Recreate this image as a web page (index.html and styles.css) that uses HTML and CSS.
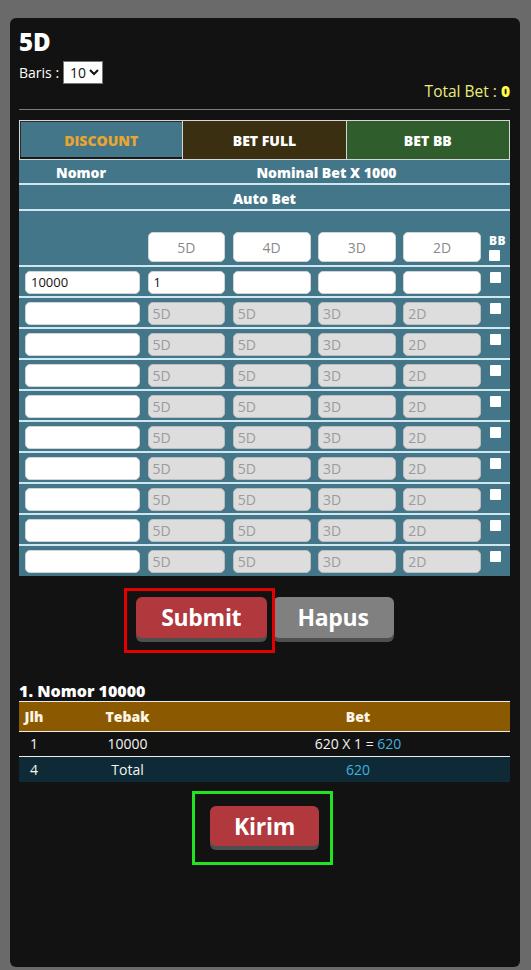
FILE: index.html
```html
<!DOCTYPE html>
<html>
<head>
<meta charset="utf-8">
<link rel="stylesheet" href="styles.css">
</head>
<body>
<div class="card">
  <h2 class="title">5D</h2>
  <div class="baris"><span>Baris :</span><select class="sel"><option>10</option></select></div>
  <div class="total">Total Bet : <b>0</b></div>
  <hr class="rule">

  <div class="bet-table">
    <div class="tabs">
      <div class="tab tab-disc">DISCOUNT</div>
      <div class="tab tab-full">BET FULL</div>
      <div class="tab tab-bb">BET BB</div>
    </div>
    <div class="head-row"><div>Nomor</div><div>Nominal Bet X 1000</div></div>
    <div class="auto-title">Auto Bet</div>

    <div class="grid-row auto-row">
      <div class="cell cell-nomor"></div>
      <div class="cell"><input class="in in-auto" placeholder="5D"></div>
      <div class="cell"><input class="in in-auto" placeholder="4D"></div>
      <div class="cell"><input class="in in-auto" placeholder="3D"></div>
      <div class="cell"><input class="in in-auto" placeholder="2D"></div>
      <div class="cell cell-bb bb-head"><span class="bb-label">BB</span><input type="checkbox" class="chk"></div>
    </div>

    <div class="grid-row data-row">
      <div class="cell cell-nomor"><input class="in" value="10000"></div>
      <div class="cell"><input class="in" value="1"></div>
      <div class="cell"><input class="in"></div>
      <div class="cell"><input class="in"></div>
      <div class="cell"><input class="in"></div>
      <div class="cell cell-bb"><input type="checkbox" class="chk"></div>
    </div>
    <div class="grid-row data-row">
      <div class="cell cell-nomor"><input class="in"></div>
      <div class="cell"><input class="in in-dis" placeholder="5D"></div>
      <div class="cell"><input class="in in-dis" placeholder="5D"></div>
      <div class="cell"><input class="in in-dis" placeholder="3D"></div>
      <div class="cell"><input class="in in-dis" placeholder="2D"></div>
      <div class="cell cell-bb"><input type="checkbox" class="chk"></div>
    </div>
    <div class="grid-row data-row">
      <div class="cell cell-nomor"><input class="in"></div>
      <div class="cell"><input class="in in-dis" placeholder="5D"></div>
      <div class="cell"><input class="in in-dis" placeholder="5D"></div>
      <div class="cell"><input class="in in-dis" placeholder="3D"></div>
      <div class="cell"><input class="in in-dis" placeholder="2D"></div>
      <div class="cell cell-bb"><input type="checkbox" class="chk"></div>
    </div>
    <div class="grid-row data-row">
      <div class="cell cell-nomor"><input class="in"></div>
      <div class="cell"><input class="in in-dis" placeholder="5D"></div>
      <div class="cell"><input class="in in-dis" placeholder="5D"></div>
      <div class="cell"><input class="in in-dis" placeholder="3D"></div>
      <div class="cell"><input class="in in-dis" placeholder="2D"></div>
      <div class="cell cell-bb"><input type="checkbox" class="chk"></div>
    </div>
    <div class="grid-row data-row">
      <div class="cell cell-nomor"><input class="in"></div>
      <div class="cell"><input class="in in-dis" placeholder="5D"></div>
      <div class="cell"><input class="in in-dis" placeholder="5D"></div>
      <div class="cell"><input class="in in-dis" placeholder="3D"></div>
      <div class="cell"><input class="in in-dis" placeholder="2D"></div>
      <div class="cell cell-bb"><input type="checkbox" class="chk"></div>
    </div>
    <div class="grid-row data-row">
      <div class="cell cell-nomor"><input class="in"></div>
      <div class="cell"><input class="in in-dis" placeholder="5D"></div>
      <div class="cell"><input class="in in-dis" placeholder="5D"></div>
      <div class="cell"><input class="in in-dis" placeholder="3D"></div>
      <div class="cell"><input class="in in-dis" placeholder="2D"></div>
      <div class="cell cell-bb"><input type="checkbox" class="chk"></div>
    </div>
    <div class="grid-row data-row">
      <div class="cell cell-nomor"><input class="in"></div>
      <div class="cell"><input class="in in-dis" placeholder="5D"></div>
      <div class="cell"><input class="in in-dis" placeholder="5D"></div>
      <div class="cell"><input class="in in-dis" placeholder="3D"></div>
      <div class="cell"><input class="in in-dis" placeholder="2D"></div>
      <div class="cell cell-bb"><input type="checkbox" class="chk"></div>
    </div>
    <div class="grid-row data-row">
      <div class="cell cell-nomor"><input class="in"></div>
      <div class="cell"><input class="in in-dis" placeholder="5D"></div>
      <div class="cell"><input class="in in-dis" placeholder="5D"></div>
      <div class="cell"><input class="in in-dis" placeholder="3D"></div>
      <div class="cell"><input class="in in-dis" placeholder="2D"></div>
      <div class="cell cell-bb"><input type="checkbox" class="chk"></div>
    </div>
    <div class="grid-row data-row">
      <div class="cell cell-nomor"><input class="in"></div>
      <div class="cell"><input class="in in-dis" placeholder="5D"></div>
      <div class="cell"><input class="in in-dis" placeholder="5D"></div>
      <div class="cell"><input class="in in-dis" placeholder="3D"></div>
      <div class="cell"><input class="in in-dis" placeholder="2D"></div>
      <div class="cell cell-bb"><input type="checkbox" class="chk"></div>
    </div>
    <div class="grid-row data-row last-row">
      <div class="cell cell-nomor"><input class="in"></div>
      <div class="cell"><input class="in in-dis" placeholder="5D"></div>
      <div class="cell"><input class="in in-dis" placeholder="5D"></div>
      <div class="cell"><input class="in in-dis" placeholder="3D"></div>
      <div class="cell"><input class="in in-dis" placeholder="2D"></div>
      <div class="cell cell-bb"><input type="checkbox" class="chk"></div>
    </div>
  </div>

  <div class="actions">
    <span class="submit-wrap"><button class="btn btn-submit">Submit</button></span>
    <button class="btn btn-hapus">Hapus</button>
  </div>

  <div class="sect-title">1. Nomor 10000</div>
  <table class="result">
    <colgroup><col class="c-jlh"><col class="c-tebak"><col></colgroup>
    <thead>
      <tr><th>Jlh</th><th>Tebak</th><th>Bet</th></tr>
    </thead>
    <tbody>
      <tr class="r-item"><td>1</td><td>10000</td><td>620 X 1 = <span class="blue">620</span></td></tr>
      <tr class="r-total"><td>4</td><td>Total</td><td><span class="blue">620</span></td></tr>
    </tbody>
  </table>

  <div class="kirim-row">
    <div class="kirim-box"><button class="btn btn-kirim">Kirim</button></div>
  </div>
</div>
</body>
</html>
```

FILE: styles.css
```css
html, body {
  margin: 0;
  padding: 0;
  background: #6a6a6a;
  font-family: "Open Sans", "Liberation Sans", sans-serif;
}

.card {
  margin: 18px 0 0 10px;
  width: 510px;
  height: 949px;
  box-sizing: border-box;
  padding: 10px 10px 0 9px;
  background: #121212;
  border-radius: 6px;
  color: #fff;
}

.title {
  margin: 0;
  font-size: 24px;
  line-height: 28px;
  font-weight: 800;
}

.baris {
  margin-top: 4px;
  height: 24px;
  display: flex;
  align-items: center;
  gap: 4px;
  font-size: 14px;
}

.sel {
  height: 23px;
  width: 40px;
  font-size: 14px;
  font-family: "Open Sans", sans-serif;
  padding: 0 0 0 2px;
  background: #fff;
  color: #111;
}

.total {
  margin-top: -3px;
  text-align: right;
  font-size: 15.5px;
  line-height: 20px;
  color: #ecec7a;
}

.total b {
  color: #ffff4a;
  font-weight: 800;
}

.rule {
  margin: 8px 0 10px;
  border: 0;
  border-top: 1px solid #7a7a7a;
  height: 0;
}

.bet-table {
  background: #437689;
}

.tabs {
  display: grid;
  grid-template-columns: 1fr 1fr 1fr;
  gap: 1px;
  padding: 1px;
  height: 40px;
  box-sizing: border-box;
  background: #d6d6d6;
}

.tab {
  display: flex;
  align-items: center;
  justify-content: center;
  font-size: 14px;
  font-weight: 800;
  color: #fff;
}

.tab-disc {
  background: #437689;
  color: #e8a530;
  box-shadow: inset 0 -2px 0 #1a1a1a, inset 1px 1px 0 #2a2a2a;
}

.tab-full {
  background: #3b2f12;
}

.tab-bb {
  background: #2f5e2c;
}

.head-row {
  display: grid;
  grid-template-columns: 124px 1fr;
  height: 20px;
  padding-top: 3px;
  line-height: 20px;
  font-size: 14px;
  font-weight: 800;
  text-align: center;
  border-bottom: 2px solid #cfe7ef;
}

.auto-title {
  height: 20px;
  padding-top: 4px;
  line-height: 20px;
  font-size: 14px;
  font-weight: 800;
  text-align: center;
  border-bottom: 2px solid #cfe7ef;
}

.grid-row {
  display: grid;
  grid-template-columns: 124px repeat(4, 85.25px) 1fr;
  box-sizing: border-box;
  border-bottom: 2px solid #cfe7ef;
}

.auto-row {
  height: 56px;
  align-items: end;
  padding-bottom: 3px;
}

.data-row {
  height: 31px;
  align-items: start;
  padding-top: 3.5px;
}

.last-row {
  height: 30px;
  border-bottom: 0;
}

.cell {
  padding: 0 3px 0 4.5px;
  min-width: 0;
}

.cell-nomor {
  padding-left: 6px;
}

.cell-bb {
  padding: 1.5px 0 0 5.5px;
}

.bb-head {
  display: flex;
  flex-direction: column;
  align-items: flex-start;
  padding: 0 0 1px 5px;
}

.bb-label {
  font-size: 12px;
  font-weight: 800;
  line-height: 14px;
  letter-spacing: 0.5px;
  margin-bottom: 2.5px;
}

.in {
  display: block;
  width: 100%;
  box-sizing: border-box;
  height: 23px;
  margin: 0;
  padding: 0 5px;
  border: 1px solid #d4d4d4;
  border-radius: 5px;
  background: #fff;
  font-family: "Open Sans", sans-serif;
  font-size: 13px;
  color: #111;
  outline: none;
}

.in-auto {
  height: 30px;
  text-align: center;
  font-size: 14px;
}

.in-auto::placeholder {
  color: #8a8a8a;
}

.in-dis {
  background: #dddddd;
  border-color: #bdbdbd;
  font-size: 14px;
  padding-left: 4px;
}

.in-dis::placeholder {
  color: #9b9b9b;
}

.chk {
  appearance: none;
  -webkit-appearance: none;
  display: block;
  width: 11px;
  height: 11px;
  margin: 0;
  border: 0;
  border-radius: 1px;
  background: #fff;
}

.actions {
  margin-top: 21px;
  display: flex;
  justify-content: center;
  gap: 5.5px;
  height: 41px;
}

.submit-wrap {
  position: relative;
  display: block;
}

.submit-wrap::after {
  content: "";
  position: absolute;
  top: -9px;
  left: -11.5px;
  right: -8px;
  bottom: -15px;
  border: 3px solid #e30000;
  pointer-events: none;
}

.btn {
  display: block;
  border: 0;
  border-radius: 6px;
  padding: 0;
  color: #fff;
  font-family: "Open Sans", sans-serif;
  font-weight: 700;
  font-size: 23px;
  line-height: 41px;
  height: 41px;
  letter-spacing: -0.3px;
  box-shadow: 0 4px 0 #4f4f4f;
}

.btn-submit {
  width: 131.5px;
  background: #b1383d;
}

.btn-hapus {
  width: 121px;
  background: #808080;
}

.sect-title {
  margin-top: 43px;
  font-size: 16px;
  line-height: 20px;
  font-weight: 800;
}

.result {
  width: 100%;
  table-layout: fixed;
  border-collapse: separate;
  border-spacing: 0;
  font-size: 14px;
  color: #f4f4f4;
}

.c-jlh {
  width: 30px;
}

.c-tebak {
  width: 157px;
}

.result th {
  background: #8b5a00;
  font-weight: 800;
  line-height: 29px;
  padding: 0;
  border-top: 1px solid #ececec;
  border-bottom: 1px solid #ececec;
  text-align: center;
  color: #fff5e6;
}

.result td {
  padding: 0;
  text-align: center;
}

.r-item td {
  line-height: 24px;
  border-bottom: 1px solid #ececec;
}

.r-total td {
  line-height: 25px;
  background: #0e2a36;
}

.blue {
  color: #3db3df;
}

.kirim-row {
  margin-top: 9px;
  display: flex;
  justify-content: center;
}

.kirim-box {
  border: 3px solid #22e322;
  padding: 12px 11px 16px 15px;
  margin-right: 4px;
}

.btn-kirim {
  width: 109px;
  height: 40px;
  line-height: 40px;
  background: #b1383d;
}
```
